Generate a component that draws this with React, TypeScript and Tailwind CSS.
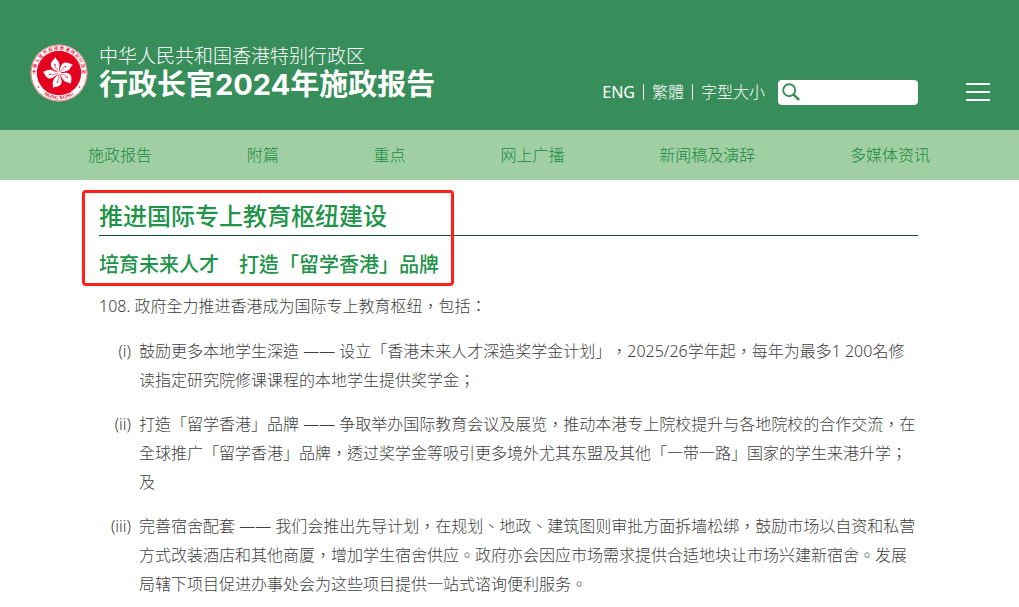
import React from 'react';

const navItems = ['施政报告', '附篇', '重点', '网上广播', '新闻稿及演辞', '多媒体资讯'];

const measures = [
  {
    label: '(i)',
    text: '鼓励更多本地学生深造 —— 设立「香港未来人才深造奖学金计划」，2025/26学年起，每年为最多1 200名修读指定研究院修课课程的本地学生提供奖学金；',
  },
  {
    label: '(ii)',
    text: '打造「留学香港」品牌 —— 争取举办国际教育会议及展览，推动本港专上院校提升与各地院校的合作交流，在全球推广「留学香港」品牌，透过奖学金等吸引更多境外尤其东盟及其他「一带一路」国家的学生来港升学；及',
  },
  {
    label: '(iii)',
    text: '完善宿舍配套 —— 我们会推出先导计划，在规划、地政、建筑图则审批方面拆墙松绑，鼓励市场以自资和私营方式改装酒店和其他商厦，增加学生宿舍供应。政府亦会因应市场需求提供合适地块让市场兴建新宿舍。发展局辖下项目促进办事处会为这些项目提供一站式谘询便利服务。',
  },
];

const petalAngles = [-18, 54, 126, 198, 270];

const Emblem: React.FC = () => (
  <svg viewBox="-29 -29 58 58" className="h-[58px] w-[58px] shrink-0" role="img" aria-label="香港特别行政区区徽">
    <defs>
      <path id="ring-top" d="M -19.5 12.5 A 23.2 23.2 0 1 1 19.5 12.5" />
      <path id="ring-bottom" d="M -18.6 18.6 A 26.3 26.3 0 0 0 18.6 18.6" />
    </defs>
    <circle r="28.5" fill="#fff" />
    <circle r="27.9" fill="none" stroke="#e60020" strokeWidth="0.5" />
    <circle r="22.2" fill="#e60020" />
    <text fill="#e60020" fontSize="4.4" fontWeight="500" fontFamily="Noto Sans CJK TC, sans-serif">
      <textPath href="#ring-top" startOffset="50%" textAnchor="middle">中 華 人 民 共 和 國 香 港 特 別 行 政 區</textPath>
    </text>
    <text fill="#e60020" fontSize="5" fontWeight="700" fontFamily="Liberation Serif, serif">
      <textPath href="#ring-bottom" startOffset="50%" textAnchor="middle">HONG KONG</textPath>
    </text>
    <circle cx="-20.6" cy="14" r="0.8" fill="#e60020" />
    <circle cx="20.6" cy="14" r="0.8" fill="#e60020" />
    {petalAngles.map((angle) => (
      <g key={angle} transform={`rotate(${angle})`}>
        <path
          d="M 0 0.3 C -1.4 -3 -5.6 -5 -5.4 -9.4 C -5.2 -12.6 -1.8 -14 1.6 -16 C 1 -13.8 3.6 -12 3.2 -8.6 C 2.8 -5.4 0.8 -4 0.5 0 Z"
          fill="#fff"
        />
        <path d="M 0 -1.5 C -0.2 -4 -2.2 -5 -1.6 -8" fill="none" stroke="#e60020" strokeWidth="0.5" />
        <circle cx="-1.4" cy="-9" r="0.8" fill="#e60020" />
      </g>
    ))}
  </svg>
);

const SearchIcon: React.FC = () => (
  <svg viewBox="0 0 18 18" className="h-[18px] w-[18px] shrink-0" fill="none" stroke="#388e5a" aria-hidden="true">
    <circle cx="7.2" cy="7.2" r="6" strokeWidth="1.9" />
    <path d="M11.6 11.6 L16.4 16.2" strokeWidth="2.6" strokeLinecap="round" />
  </svg>
);

const Header: React.FC = () => (
  <header className="flex h-[130px] items-center bg-[#388e5a] pt-[15px] pr-[29px] pl-[30px] text-white">
    <Emblem />
    <div className="ml-[11px] whitespace-nowrap">
      <p className="font-['Inter','Noto_Sans_CJK_SC',sans-serif] text-[19px] leading-6 font-light">
        中华人民共和国香港特别行政区
      </p>
      <h1 className="font-['Inter','Noto_Sans_CJK_SC',sans-serif] text-[29px] leading-8 font-bold">
        行政长官2024年施政报告
      </h1>
    </div>
    <div className="mt-[39px] ml-auto flex items-center whitespace-nowrap">
      <a href="#eng" className="leading-4 font-normal">ENG</a>
      <a href="#trad" className="ml-2 border-l border-white pl-2 leading-4">繁體</a>
      <a href="#font-size" className="ml-2 border-l border-white pl-2 leading-4">字型大小</a>
      <label className="ml-[13px] flex h-[25px] w-[140px] items-center rounded bg-white pl-1">
        <SearchIcon />
        <input type="search" aria-label="搜寻" className="w-full min-w-0 px-2 text-sm text-gray-700 outline-none" />
      </label>
      <button type="button" aria-label="选单" className="ml-12 flex w-6 flex-col gap-[6px]">
        <span className="h-[2px] bg-white" />
        <span className="h-[2px] bg-white" />
        <span className="h-[2px] bg-white" />
      </button>
    </div>
  </header>
);

export default function App() {
  return (
    <div
      lang="zh-Hant"
      className="bg-white font-['Noto_Sans','Noto_Sans_CJK_TC',sans-serif] text-base font-light text-[#404040] [text-spacing-trim:space-all]"
    >
      <Header />
      <nav className="bg-[#a1cfa4] pr-[89px] pl-[88px]">
        <ul className="flex h-[50px] items-center justify-between text-[#158a40]">
          {navItems.map((item) => (
            <li key={item}>
              <a href={`#${item}`}>{item}</a>
            </li>
          ))}
        </ul>
      </nav>
      <main className="relative pt-[18px] pr-[101px] pb-2 pl-[99px]">
        <div className="pointer-events-none absolute top-[10px] left-[82px] h-[96px] w-[372px] rounded border-[3px] border-[#fe2019]" />
        <h2 className="border-b border-[#12502a] pb-px text-2xl leading-9 font-medium text-[#21944a]">
          推进国际专上教育枢纽建设
        </h2>
        <h3 className="mt-[14px] text-xl leading-[29px] font-medium text-[#21944a]">培育未来人才　打造「留学香港」品牌</h3>
        <p className="mt-[13px] leading-[29px]">108. 政府全力推进香港成为国际专上教育枢纽，包括：</p>
        <ol className="mt-4 flex flex-col gap-[15px] leading-[29px]">
          {measures.map((measure) => (
            <li key={measure.label} className="flex">
              <span className="w-8 shrink-0 text-right">{measure.label}</span>
              <p className="ml-2">{measure.text}</p>
            </li>
          ))}
        </ol>
      </main>
    </div>
  );
}
